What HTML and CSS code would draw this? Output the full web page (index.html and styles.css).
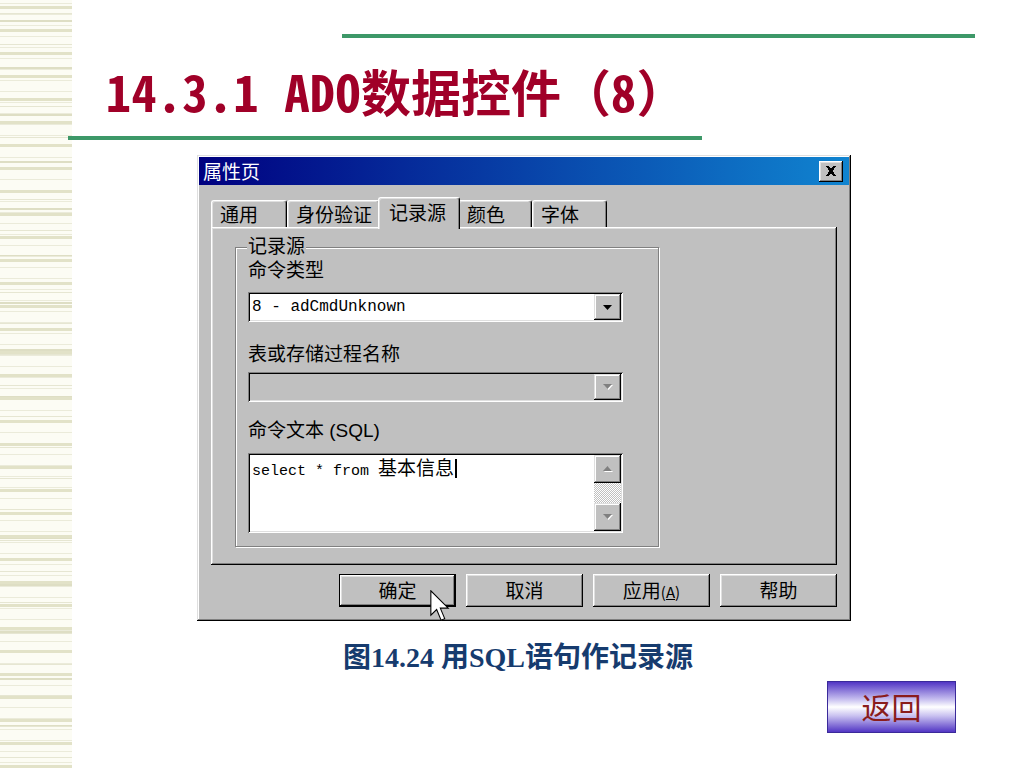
FILE: index.html
```html
<!DOCTYPE html>
<html lang="zh-CN">
<head>
    <meta charset="UTF-8">
    <title>14.3.1 ADO数据控件（8）</title>
    <link rel="stylesheet" href="styles.css">
</head>
<body>

<div class="slide">
    <div class="rule rule-top"></div>
    <h1 class="title"><span class="hw">14.3.1 ADO</span>数据控件（<span class="hw">8</span>）</h1>
    <div class="rule rule-bottom"></div>

    <!-- property page dialog -->
    <div class="dialog">
        <div class="titlebar">
            <span class="caption-text">属性页</span>
            <div class="close-btn">
                <svg width="12" height="10" viewBox="0 0 12 10" shape-rendering="crispEdges">
                    <path d="M1 0h3l2 3 2-3h3l-3.5 5 3.5 5h-3l-2-3-2 3h-3l3.5-5z" fill="#000"/>
                </svg>
            </div>
        </div>

        <div class="tabs">
            <div class="tab tab-1">通用</div>
            <div class="tab tab-2">身份验证</div>
            <div class="tab tab-active">记录源</div>
            <div class="tab tab-4">颜色</div>
            <div class="tab tab-5">字体</div>
        </div>

        <div class="panel">
            <fieldset class="group">
                <legend>记录源</legend>

                <div class="label label-1">命令类型</div>
                <div class="combo combo-1">
                    <div class="combo-text">8 - adCmdUnknown</div>
                    <div class="drop-btn">
                        <svg width="9" height="5" viewBox="0 0 9 5"><polygon points="0,0 9,0 4.5,5" fill="#000"/></svg>
                    </div>
                </div>

                <div class="label label-2">表或存储过程名称</div>
                <div class="combo combo-2 disabled">
                    <div class="combo-text"></div>
                    <div class="drop-btn">
                        <svg width="10" height="6" viewBox="0 0 10 6"><polygon points="1,1 10,1 5.5,6" fill="#fff"/><polygon points="0,0 9,0 4.5,5" fill="#808080"/></svg>
                    </div>
                </div>

                <div class="label label-3">命令文本 (SQL)</div>
                <div class="memo">
                    <div class="memo-text">select * from <span class="memo-cjk">基本信息</span><span class="caret"></span></div>
                    <div class="scrollbar">
                        <div class="scroll-btn">
                            <svg width="10" height="6" viewBox="0 0 10 6"><polygon points="5.5,1 10,6 1,6" fill="#fff"/><polygon points="4.5,0 9,5 0,5" fill="#808080"/></svg>
                        </div>
                        <div class="scroll-track"></div>
                        <div class="scroll-btn">
                            <svg width="10" height="6" viewBox="0 0 10 6"><polygon points="1,1 10,1 5.5,6" fill="#fff"/><polygon points="0,0 9,0 4.5,5" fill="#808080"/></svg>
                        </div>
                    </div>
                </div>
            </fieldset>
        </div>

        <div class="buttons">
            <div class="btn btn-default">确定</div>
            <div class="btn">取消</div>
            <div class="btn">应用<span class="accel">(<u>A</u>)</span></div>
            <div class="btn">帮助</div>
        </div>

        <!-- mouse pointer over the OK button -->
        <svg class="pointer" width="20" height="32" viewBox="0 0 13 21">
            <path d="M0.5 0.5V16.5L4.3 12.8L7.2 19.8L9.6 18.8L6.7 11.9H11.9Z" fill="#fff" stroke="#000" stroke-width="0.7" stroke-linejoin="miter"/>
        </svg>
    </div>

    <div class="figure-caption">图14.24 用SQL语句作记录源</div>

    <div class="back-btn">返回</div>
</div>

</body>
</html>
```

FILE: styles.css
```css
body {
    margin: 0;
    width: 1024px;
    height: 768px;
    overflow: hidden;
    background-color: #fff;
    /* ruled strip down the left edge */
    background-image:
        repeating-linear-gradient(to bottom, transparent 0 6px, #e2e2c8 6px 9px, transparent 9px 23px),
        repeating-linear-gradient(to bottom, transparent 0 13px, #e6e6d2 13px 14px, transparent 14px 31px),
        repeating-linear-gradient(to bottom, transparent 0 3px, #ebebda 3px 4px, transparent 4px 11px),
        repeating-linear-gradient(to bottom, transparent 0 20px, #dedec4 20px 22px, transparent 22px 47px),
        linear-gradient(#fcfcf4, #fcfcf4);
    background-size: 72px 100%;
    background-repeat: no-repeat;
}
.slide {
    position: relative;
    width: 1024px;
    height: 768px;
}
.rule {
    height: 4px;
    background: #3d9868;
}
.rule-top {
    margin: 34px 0 0 342px;
    width: 633px;
}
.rule-bottom {
    margin: 21px 0 0 68px;
    width: 634px;
}
.title {
    margin: 27px 0 0 106px;
    height: 50px;
    font-family: "Noto Sans CJK SC", sans-serif;
    font-size: 50px;
    line-height: 50px;
    font-weight: 700;
    color: #a00028;
    white-space: nowrap;
}
.hw {
    font-feature-settings: "hwid" 1;
    letter-spacing: 0.5px;
}

/* ---- dialog ---- */
.dialog {
    position: relative;
    box-sizing: border-box;
    width: 654px;
    height: 466px;
    margin: 15px 0 0 197px;
    padding: 2px;
    background: #c0c0c0;
    box-shadow: inset -1px -1px #000, inset 1px 1px #dfdfdf, inset -2px -2px #808080, inset 2px 2px #fff;
    font-family: "Noto Sans CJK SC", sans-serif;
    font-size: 19px;
    color: #000;
    display: flex;
    flex-direction: column;
}
.titlebar {
    height: 28px;
    display: flex;
    align-items: center;
    justify-content: space-between;
    padding: 0 6px 0 4px;
    background: linear-gradient(to right, #000080, #1084d0);
}
.caption-text {
    color: #fff;
    font-size: 19px;
    line-height: 22px;
}
.close-btn {
    width: 24px;
    height: 21px;
    background: #c0c0c0;
    box-shadow: inset -1px -1px #000, inset 1px 1px #fff, inset -2px -2px #808080, inset 2px 2px #dfdfdf;
    display: flex;
    align-items: center;
    justify-content: center;
}

.tabs {
    display: flex;
    align-items: flex-end;
    margin: 12px 0 0 12px;
}
.tab {
    box-sizing: border-box;
    height: 27px;
    padding: 0 0 0 8px;
    line-height: 25px;
    background: #c0c0c0;
    border-top: 1px solid #fff;
    border-left: 1px solid #fff;
    border-right: 1px solid #000;
    border-radius: 3px 3px 0 0;
    box-shadow: inset -1px 0 #808080, inset 1px 1px #dfdfdf;
}
.tab-1 { width: 76px; }
.tab-2 { width: 93px; }
.tab-4 { width: 74px; }
.tab-5 { width: 75px; }
.tab-active {
    position: relative;
    z-index: 1;
    width: 82px;
    height: 32px;
    margin: 0 -2px -2px -2px;
    padding-left: 10px;
    line-height: 27px;
}

.panel {
    box-sizing: border-box;
    height: 338px;
    margin: 0 12px;
    padding: 10px 0 0 24px;
    background: #c0c0c0;
    box-shadow: inset -1px -1px #000, inset 1px 1px #fff, inset -2px -2px #808080, inset 2px 2px #dfdfdf;
}
.group {
    box-sizing: border-box;
    width: 424px;
    height: 310px;
    margin: 0;
    padding: 0 0 0 12px;
    border: 1px solid #808080;
    box-shadow: inset 1px 1px #fff, 1px 1px #fff;
    font-family: "Liberation Sans", "Noto Sans CJK SC", sans-serif;
}
.group legend {
    margin-left: -1px;
    padding: 0 1px;
    line-height: 20px;
    background: #c0c0c0;
}
.label {
    line-height: 22px;
}
.label-1 { margin-top: 3px; }
.label-2 { margin-top: 22px; }
.label-3 { margin-top: 18px; }

.combo {
    box-sizing: border-box;
    width: 375px;
    height: 30px;
    padding: 2px;
    display: flex;
    background: #fff;
    box-shadow: inset 1px 1px #808080, inset -1px -1px #fff, inset 2px 2px #000, inset -2px -2px #dfdfdf;
}
.combo-1 { margin-top: 10px; }
.combo-2 { margin-top: 6px; }
.combo.disabled { background: #c0c0c0; }
.combo-text {
    flex: 1;
    padding-left: 2px;
    font-family: "Liberation Mono", monospace;
    font-size: 16px;
    line-height: 26px;
}
.drop-btn, .scroll-btn {
    width: 27px;
    height: 26px;
    background: #c0c0c0;
    box-shadow: inset -1px -1px #000, inset 1px 1px #dfdfdf, inset -2px -2px #808080, inset 2px 2px #fff;
    display: flex;
    align-items: center;
    justify-content: center;
}

.memo {
    box-sizing: border-box;
    width: 375px;
    height: 80px;
    margin-top: 11px;
    padding: 2px;
    display: flex;
    background: #fff;
    box-shadow: inset 1px 1px #808080, inset -1px -1px #fff, inset 2px 2px #000, inset -2px -2px #dfdfdf;
}
.memo-text {
    flex: 1;
    padding: 2px 0 0 2px;
    font-family: "Liberation Mono", monospace;
    font-size: 15px;
    line-height: 20px;
    white-space: nowrap;
}
.memo-cjk {
    font-family: "Noto Sans CJK SC", sans-serif;
    font-size: 19px;
}
.caret {
    display: inline-block;
    width: 2px;
    height: 19px;
    margin-left: 1px;
    vertical-align: -3px;
    background: #000;
}
.scrollbar {
    display: flex;
    flex-direction: column;
}
.scroll-btn { height: 28px; }
.scroll-track {
    flex: 1;
    background: repeating-conic-gradient(#fff 0 25%, #c0c0c0 0 50%) 0 0 / 2px 2px;
}

.buttons {
    display: flex;
    justify-content: flex-end;
    gap: 10px;
    margin: 9px 12px 0 0;
}
.btn {
    box-sizing: border-box;
    width: 117px;
    height: 33px;
    text-align: center;
    line-height: 32px;
    background: #c0c0c0;
    box-shadow: inset -1px -1px #000, inset 1px 1px #fff, inset -2px -2px #808080, inset 2px 2px #dfdfdf;
}
.btn-default {
    border: 1px solid #000;
    line-height: 30px;
}
.accel {
    font-size: 15px;
}
.pointer {
    position: absolute;
    left: 233px;
    top: 435px;
}

.figure-caption {
    margin: 20px 0 0 343px;
    font-family: "Liberation Serif", "Noto Sans CJK SC", serif;
    font-size: 28px;
    line-height: 34px;
    font-weight: 700;
    color: #163b6e;
    white-space: nowrap;
}
.back-btn {
    box-sizing: border-box;
    width: 129px;
    height: 52px;
    margin: 6px 0 0 827px;
    border: 1px solid #3a2a9a;
    background: linear-gradient(to bottom, #5236c4 0%, #c8c0f0 35%, #ffffff 50%, #c8c0f0 68%, #5236c4 100%);
    text-align: center;
    font-family: "Noto Sans CJK SC", serif;
    font-size: 30px;
    line-height: 48px;
    color: #8a1c1c;
}
```
